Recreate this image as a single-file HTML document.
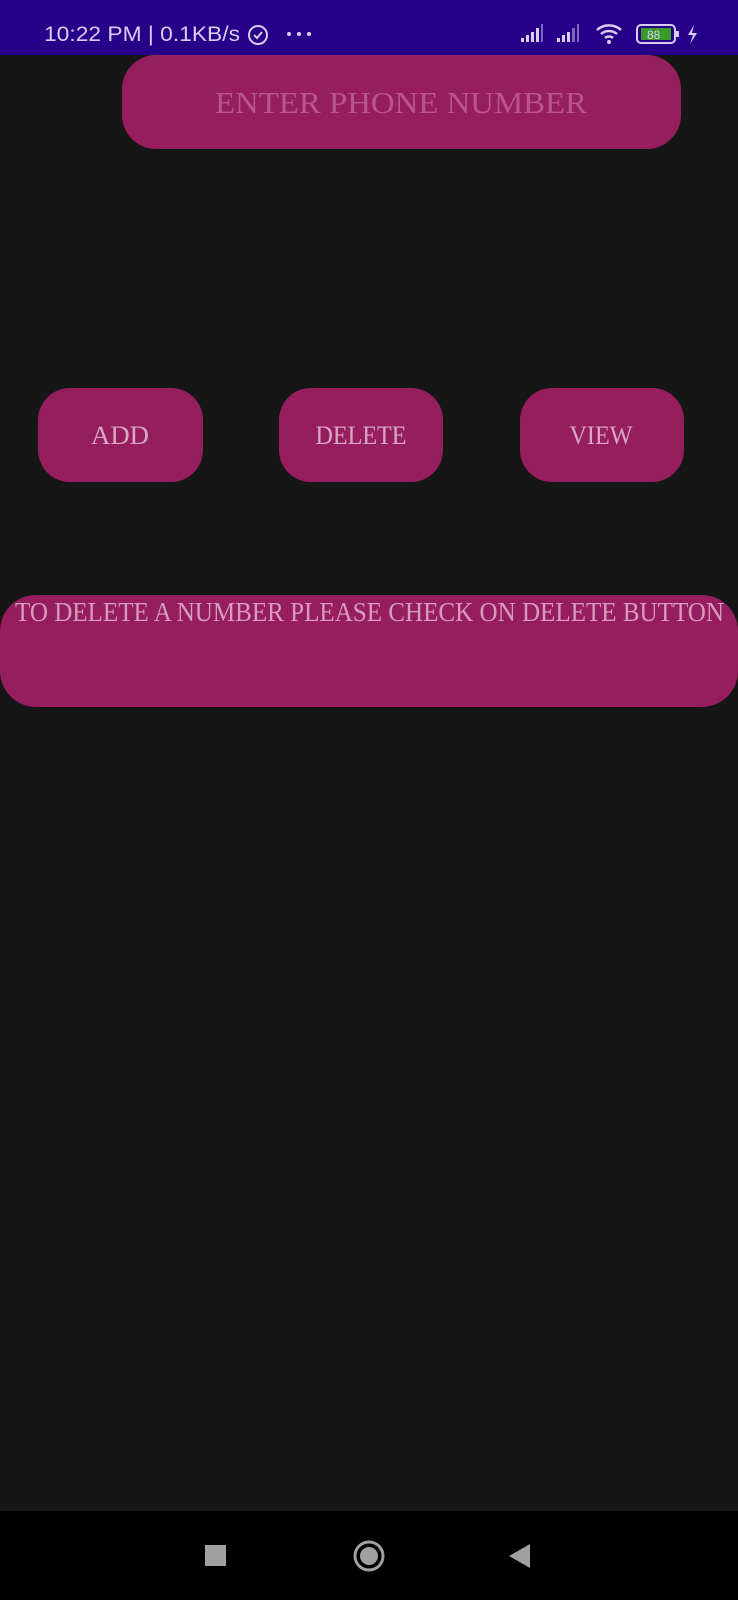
<!DOCTYPE html>
<html><head><meta charset="utf-8"><style>
html,body{margin:0;padding:0;width:738px;height:1600px;background:#161616;overflow:hidden;font-family:"Liberation Serif",serif}
.abs{position:absolute}
.pink{background:#961e5f}
</style></head><body>
<div class="abs" style="left:0;top:0;width:738px;height:55px;background:#27008a"></div>
<svg class="abs" style="left:0;top:0" width="738" height="1600">
 <g font-family="Liberation Sans, sans-serif" fill="#d8cdf0" font-size="21">
  <text x="44" y="41" textLength="196" lengthAdjust="spacingAndGlyphs">10:22 PM | 0.1KB/s</text>
 </g>
 <circle cx="258" cy="35" r="9" fill="none" stroke="#d8cdf0" stroke-width="2"/>
 <path d="M254 35 l3 3 l5 -6" fill="none" stroke="#d8cdf0" stroke-width="2"/>
 <circle cx="289" cy="34" r="2" fill="#d8cdf0"/><circle cx="299" cy="34" r="2" fill="#d8cdf0"/><circle cx="309" cy="34" r="2" fill="#d8cdf0"/>
 <g fill="#d8cdf0">
  <rect x="521" y="38" width="3" height="4"/><rect x="526" y="35" width="3" height="7"/><rect x="531" y="32" width="3" height="10"/><rect x="536" y="28" width="3" height="14"/><rect x="541" y="24" width="2" height="18" opacity=".5"/>
  <rect x="557" y="38" width="3" height="4"/><rect x="562" y="35" width="3" height="7"/><rect x="567" y="32" width="3" height="10"/><rect x="572" y="28" width="3" height="14" opacity=".5"/><rect x="577" y="24" width="2" height="18" opacity=".5"/>
 </g>
 <path d="M597 30 a18 18 0 0 1 24 0 M601 34 a12 12 0 0 1 16 0 M605 38 a6 6 0 0 1 8 0" fill="none" stroke="#d8cdf0" stroke-width="2.5"/>
 <circle cx="609" cy="42" r="2" fill="#d8cdf0"/>
 <rect x="637" y="25" width="38" height="18" rx="4" fill="none" stroke="#d8cdf0" stroke-width="2"/>
 <rect x="641" y="28" width="30" height="12" fill="#3a9a2a"/>
 <rect x="676" y="31" width="3" height="6" fill="#d8cdf0"/>
 <text x="647" y="39" font-family="Liberation Sans, sans-serif" font-size="12" fill="#d8cdf0">88</text>
 <path d="M694 25 l-6 10 h5 l-3 9 l7 -11 h-5 z" fill="#d8cdf0"/>

 <rect x="122" y="55" width="559" height="94" rx="34" fill="#961e5f"/>
 <text x="401" y="113" text-anchor="middle" font-size="31" fill="#b8568a" textLength="372" lengthAdjust="spacingAndGlyphs">ENTER PHONE NUMBER</text>

 <rect x="38" y="388" width="165" height="94" rx="32" fill="#961e5f"/>
 <rect x="279" y="388" width="164" height="94" rx="32" fill="#961e5f"/>
 <rect x="520" y="388" width="164" height="94" rx="32" fill="#961e5f"/>
 <g font-size="26" fill="#d9a7c2" text-anchor="middle">
  <text x="120" y="444" textLength="58" lengthAdjust="spacingAndGlyphs">ADD</text>
  <text x="361" y="444" textLength="91" lengthAdjust="spacingAndGlyphs">DELETE</text>
  <text x="601" y="444" textLength="63" lengthAdjust="spacingAndGlyphs">VIEW</text>
 </g>

 <rect x="0" y="595" width="738" height="112" rx="36" fill="#961e5f"/>
 <text x="15" y="621" font-size="27" fill="#d69bbd" textLength="709" lengthAdjust="spacingAndGlyphs">TO DELETE A NUMBER PLEASE CHECK ON DELETE BUTTON</text>

 <rect x="0" y="1511" width="738" height="89" fill="#000"/>
 <rect x="205" y="1545" width="21" height="21" fill="#a0a0a0"/>
 <circle cx="369" cy="1556" r="14" fill="none" stroke="#a0a0a0" stroke-width="3"/>
 <circle cx="369" cy="1556" r="9" fill="#a0a0a0"/>
 <path d="M530 1544 v24 l-21 -12 z" fill="#a0a0a0"/>
</svg>
</body></html>
